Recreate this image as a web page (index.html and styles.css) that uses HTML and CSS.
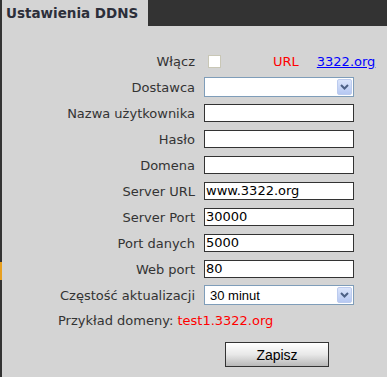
FILE: index.html
```html
<!DOCTYPE html>
<html lang="pl">
<head>
  <meta charset="UTF-8">
  <title>Ustawienia DDNS</title>
  <link rel="stylesheet" href="styles.css">
</head>
<body>
  <div class="frame">
    <div class="side-mark"></div>
    <div class="panel">
      <div class="tabs">
        <div class="tab">Ustawienia DDNS</div>
      </div>
      <div class="content">
        <form class="ddns-form">
          <div class="row">
            <label class="label">Włącz</label>
            <div class="field enable-field">
              <span class="checkbox"></span>
              <span class="url-label">URL</span>
              <a class="url-link" href="#">3322.org</a>
            </div>
          </div>
          <div class="row">
            <label class="label">Dostawca</label>
            <div class="select">
              <span class="select-value"></span>
              <span class="select-btn">
                <svg width="9" height="6" viewBox="0 0 9 6"><path d="M1 1 L4.5 4.5 L8 1" fill="none" stroke="#4d6185" stroke-width="2"/></svg>
              </span>
            </div>
          </div>
          <div class="row">
            <label class="label">Nazwa użytkownika</label>
            <div class="input"></div>
          </div>
          <div class="row">
            <label class="label">Hasło</label>
            <div class="input"></div>
          </div>
          <div class="row">
            <label class="label">Domena</label>
            <div class="input"></div>
          </div>
          <div class="row">
            <label class="label">Server URL</label>
            <div class="input">www.3322.org</div>
          </div>
          <div class="row">
            <label class="label">Server Port</label>
            <div class="input">30000</div>
          </div>
          <div class="row">
            <label class="label">Port danych</label>
            <div class="input">5000</div>
          </div>
          <div class="row">
            <label class="label">Web port</label>
            <div class="input">80</div>
          </div>
          <div class="row">
            <label class="label">Częstość aktualizacji</label>
            <div class="select">
              <span class="select-value">30 minut</span>
              <span class="select-btn">
                <svg width="9" height="6" viewBox="0 0 9 6"><path d="M1 1 L4.5 4.5 L8 1" fill="none" stroke="#4d6185" stroke-width="2"/></svg>
              </span>
            </div>
          </div>
          <div class="example">Przykład domeny: <span class="example-value">test1.3322.org</span></div>
          <div class="actions">
            <button type="button" class="save">Zapisz</button>
          </div>
        </form>
      </div>
    </div>
  </div>
</body>
</html>
```

FILE: styles.css
```css
* {
  margin: 0;
  padding: 0;
  box-sizing: border-box;
}

body {
  background: #333333;
  font-family: 'DejaVu Sans', Verdana, sans-serif;
  font-size: 13px;
  color: #333;
  width: 387px;
  height: 377px;
  overflow: hidden;
}

/* Frame */
.frame {
  position: relative;
  display: flex;
  height: 377px;
  padding-left: 2px;
}

.side-mark {
  position: absolute;
  left: 0;
  top: 262px;
  width: 2px;
  height: 18px;
  background: #e8a020;
}

.panel {
  flex: 1;
  display: flex;
  flex-direction: column;
}

/* Tabs */
.tabs {
  display: flex;
  height: 26px;
}

.tab {
  width: 146px;
  background: #d4d4d4;
  font-weight: bold;
  font-size: 13.5px;
  color: #2c2f3a;
  padding: 5px 0 0 4px;
}

.content {
  flex: 1;
  background: #d4d4d4;
  padding-top: 22px;
}

/* Form */
.row {
  display: grid;
  grid-template-columns: 193px 150px;
  column-gap: 9px;
  align-items: center;
  height: 26px;
}

.label {
  text-align: right;
  white-space: nowrap;
}

.enable-field {
  display: flex;
  align-items: center;
  white-space: nowrap;
}

.enable-field > * {
  flex-shrink: 0;
}

.checkbox {
  width: 13px;
  height: 13px;
  margin-left: 4px;
  background: #fff;
  border: 1px solid #c9c7b6;
}

.url-label {
  color: #ff0000;
  margin-left: 52px;
}

.url-link {
  color: #0000ff;
  margin-left: 18px;
}

.input {
  height: 18px;
  background: #fff;
  border: 1px solid #333;
  font-size: 13px;
  line-height: 16px;
  padding-left: 1px;
  color: #000;
}

.select {
  display: flex;
  align-items: center;
  justify-content: space-between;
  height: 20px;
  background: #fff;
  border: 1px solid #7f9db9;
  padding: 1px;
  font-family: 'Liberation Sans', Arial, sans-serif;
  font-size: 13px;
  color: #000;
}

.select-value {
  padding-left: 4px;
}

.select-btn {
  display: flex;
  align-items: center;
  justify-content: center;
  width: 15px;
  height: 16px;
  background: linear-gradient(#dbe5fb, #b6c8f2);
  border: 1px solid #bccbee;
  border-radius: 2px;
}

.example {
  height: 26px;
  line-height: 26px;
  padding-left: 56px;
  white-space: nowrap;
}

.example-value {
  color: #ff0000;
}

.actions {
  padding: 8px 0 0 223px;
}

.save {
  width: 104px;
  height: 25px;
  border: 1px solid #333;
  background: linear-gradient(#ffffff, #e8e8e8 50%, #b8b8b8);
  font-family: 'Liberation Sans', Arial, sans-serif;
  font-size: 14px;
  color: #000;
}
```
